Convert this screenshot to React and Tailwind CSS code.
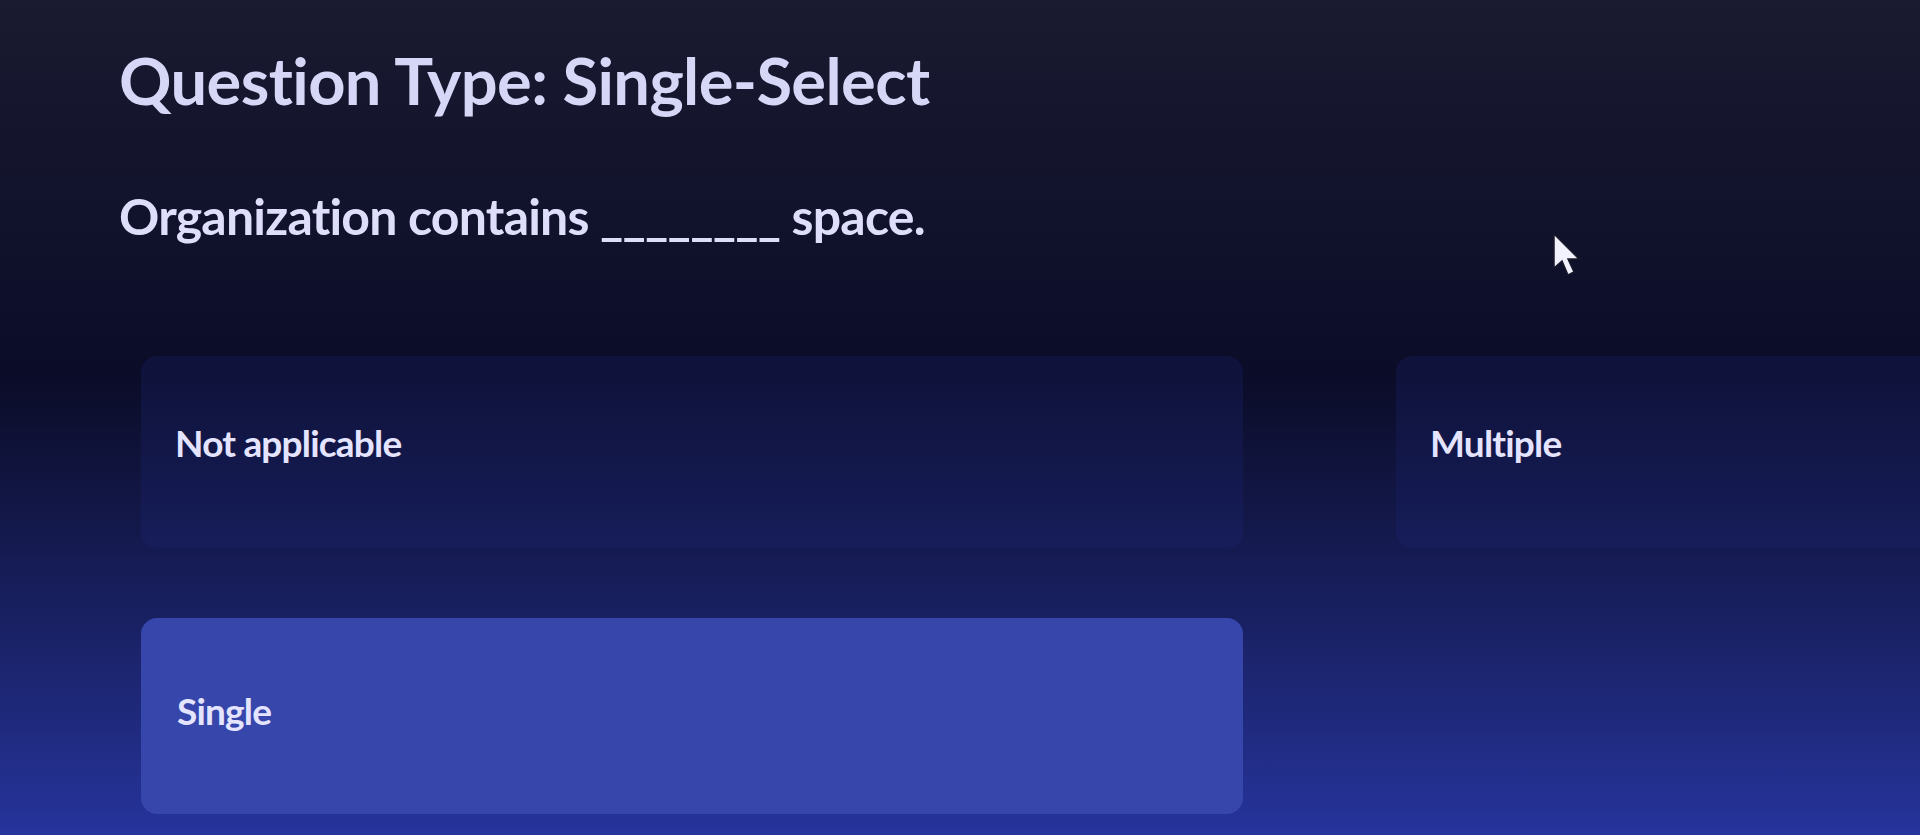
import React from "react";

const options = [
  { id: "na", label: "Not applicable", selected: false },
  { id: "multiple", label: "Multiple", selected: false },
  { id: "single", label: "Single", selected: true },
];

// Плитка варианта ответа
function OptionCard({ label, selected }) {
  return (
    <button
      type="button"
      className={
        selected
          ? "flex h-[196px] items-center rounded-2xl bg-[#3646ab] pl-[36px] pb-[10px] text-left"
          : "flex h-[192px] items-center rounded-2xl bg-[#1c2678]/25 pl-[34px] pb-[18px] text-left"
      }
    >
      <span className="text-[37px] font-bold tracking-[-0.8px] text-[#e4e4ff]">{label}</span>
    </button>
  );
}

function Cursor() {
  return (
    <svg className="absolute left-[1552px] top-[232px]" width="30" height="46" viewBox="0 0 30 46">
      <path d="M2 2 L2 36 L10 29 L16 43 L22 40 L16 27 L27 27 Z" fill="#f2f2ff" stroke="#1a1a2a" strokeWidth="1.5" />
    </svg>
  );
}

export default function App() {
  return (
    <div className="relative h-[835px] w-[1920px] overflow-hidden bg-gradient-to-b from-[#1a1a30] via-[#0b0c28] via-45% to-[#26349c] font-['Lato','Open_Sans',sans-serif]">
      <div className="px-[119px] pt-[38px]">
        <h1 className="text-[65px] font-bold leading-[84px] tracking-[-0.6px] text-[#d6d6f6]">
          Question Type: Single-Select
        </h1>
        <p className="mt-[64px] text-[50px] font-bold leading-[60px] tracking-[-0.8px] text-[#dedefa]">
          Organization contains ________ space.
        </p>
        <div className="ml-[22px] mt-[110px] grid grid-cols-[1102px_1102px] gap-x-[153px] gap-y-[70px]">
          {options.map((o) => (
            <OptionCard key={o.id} label={o.label} selected={o.selected} />
          ))}
        </div>
      </div>
      <Cursor />
    </div>
  );
}
